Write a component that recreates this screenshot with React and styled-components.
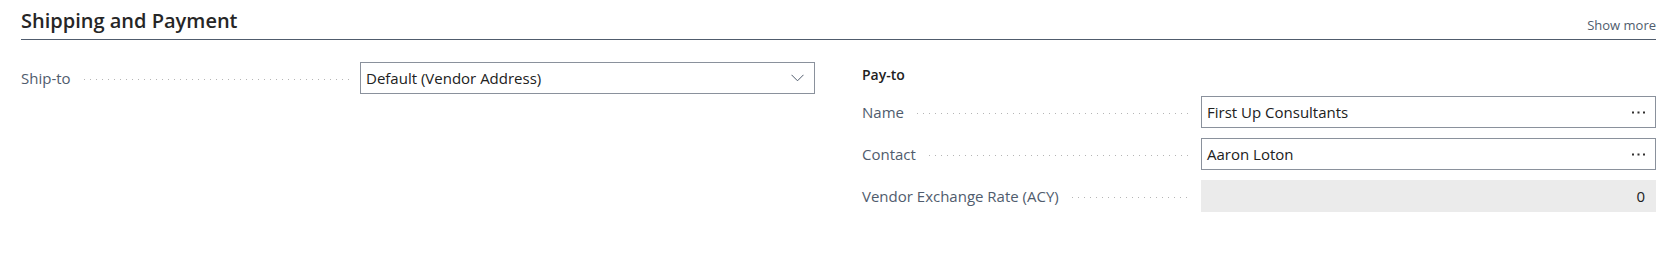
import styled, { createGlobalStyle } from 'styled-components';

const GlobalStyle = createGlobalStyle`
  body {
    margin: 0;
    background: #ffffff;
    font-family: 'Open Sans', 'Noto Sans', sans-serif;
    color: #212121;
  }
`;

const Page = styled.div`
  width: 1672px;
  height: 254px;
  padding: 0 16px 0 21px;
  box-sizing: border-box;
`;

const Header = styled.div`
  display: flex;
  align-items: flex-end;
  justify-content: space-between;
  height: 40px;
  border-bottom: 1px solid #505c6d;
  padding-bottom: 5px;
  box-sizing: border-box;
`;

const Title = styled.h2`
  margin: 0;
  font-size: 20px;
  font-weight: 600;
  color: #262626;
  line-height: 26px;
`;

const ShowMore = styled.span`
  font-size: 13px;
  color: #505c6d;
  line-height: 16px;
  margin-bottom: 1px;
`;

const Columns = styled.div`
  display: grid;
  grid-template-columns: 794px 794px;
  column-gap: 47px;
  padding-top: 22px;
`;

const Column = styled.div`
  display: flex;
  flex-direction: column;
  gap: 10px;
`;

const GroupCaption = styled.div`
  height: 24px;
  line-height: 26px;
  font-size: 14px;
  font-weight: 600;
  color: #212121;
`;

const Row = styled.div`
  display: grid;
  grid-template-columns: 339px 455px;
  height: 32px;
  align-items: center;
`;

const Label = styled.div`
  display: flex;
  align-items: center;
  gap: 13px;
  padding-right: 11px;
  font-size: 15px;
  color: #505c6d;
  white-space: nowrap;
`;

const Leader = styled.span`
  flex: 1;
  height: 1px;
  margin-top: 2px;
  background-image: linear-gradient(to right, #b5b5b5 1px, transparent 1px);
  background-size: 6px 1px;
  background-repeat: repeat-x;
`;

const Box = styled.div`
  display: flex;
  align-items: center;
  height: 32px;
  box-sizing: border-box;
  padding: 0 10px 0 5px;
  border: 1px solid ${(p) => (p.$readOnly ? '#ebebeb' : '#8a919c')};
  background: ${(p) => (p.$readOnly ? '#ebebeb' : '#ffffff')};
  font-size: 15px;
  color: #212121;
`;

const Value = styled.span`
  flex: 1;
  text-align: ${(p) => (p.$right ? 'right' : 'left')};
`;

const Chevron = () => (
  <svg width="13" height="8" viewBox="0 0 13 8">
    <polyline points="0.5,0.8 6.5,6.8 12.5,0.8" fill="none" stroke="#505c6d" strokeWidth="1" />
  </svg>
);

const Ellipsis = () => (
  <svg width="13" height="3" viewBox="0 0 13 3">
    <rect x="0" y="0.5" width="2" height="2" fill="#323130" />
    <rect x="5.5" y="0.5" width="2" height="2" fill="#323130" />
    <rect x="11" y="0.5" width="2" height="2" fill="#323130" />
  </svg>
);

const Field = ({ label, value, kind }) => (
  <Row>
    <Label>
      {label}
      <Leader />
    </Label>
    <Box $readOnly={kind === 'readonly'}>
      <Value $right={kind === 'readonly'}>{value}</Value>
      {kind === 'select' && <Chevron />}
      {kind === 'lookup' && <Ellipsis />}
    </Box>
  </Row>
);

const App = () => {
  return (
    <Page>
      <GlobalStyle />
      <Header>
        <Title>Shipping and Payment</Title>
        <ShowMore>Show more</ShowMore>
      </Header>
      <Columns>
        <Column>
          <Field label="Ship-to" value="Default (Vendor Address)" kind="select" />
        </Column>
        <Column>
          <GroupCaption>Pay-to</GroupCaption>
          <Field label="Name" value="First Up Consultants" kind="lookup" />
          <Field label="Contact" value="Aaron Loton" kind="lookup" />
          <Field label="Vendor Exchange Rate (ACY)" value="0" kind="readonly" />
        </Column>
      </Columns>
    </Page>
  );
};

export default App;
